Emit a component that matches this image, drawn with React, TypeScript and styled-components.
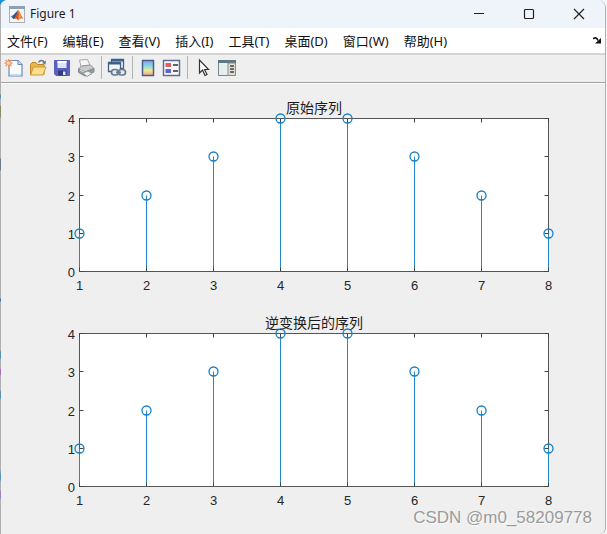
import React from "react";
import styled, { createGlobalStyle } from "styled-components";

const Global = createGlobalStyle`
  * { box-sizing: border-box; }
  body {
    margin: 0;
    background: #f6f6f6;
    font-family: "Noto Sans", "Noto Sans CJK SC", sans-serif;
    color: #1a1a1a;
  }
`;

const Desktop = styled.div`
  min-height: 100vh;
  display: flex;
  padding-right: 1px;
  background: linear-gradient(135deg, #1d8fd6 0, #1d8fd6 4px, #e9ddb8 5px, #f6f6f6 40px);
`;

const Window = styled.main`
  position: relative;
  flex: 1;
  min-width: 0;
  display: flex;
  flex-direction: column;
  overflow: hidden;
  padding-left: 1px;
  border-right: 1px solid #b0b0b0;
  border-radius: 8px 8px 6px 0;
  background:
    linear-gradient(
      #b0b0b0 94px, #4f93b8 95px 98px, #b0b0b0 99px 105px, #8d8a60 106px 117px,
      #b0b0b0 118px 158px, #6c7c88 159px 170px, #b0b0b0 171px 298px, #4a6fa8 299px 301px,
      #b0b0b0 302px 350px, #5b93b8 352px 358px, #b0b0b0 360px 368px, #a668c4 370px 374px,
      #b0b0b0 376px 390px, #5b93b8 392px 398px, #b0b0b0 400px 470px, #5b93b8 474px 479px,
      #b0b0b0 482px 490px, #a080c8 492px 498px, #b0b0b0 500px
    ) 0 0 / 1px 100% no-repeat,
    #efefef;
`;

const TitleBar = styled.header`
  height: 28px;
  display: flex;
  align-items: center;
  padding: 0 1px 0 8px;
  background: #eff3fa;
`;

const Title = styled.h1`
  flex: 1;
  margin: 0 0 0 5px;
  font-size: 12px;
  line-height: 18px;
  font-weight: 400;
`;

const CaptionButton = styled.button`
  width: 50px;
  height: 24px;
  padding: 0;
  border: 0;
  display: grid;
  place-items: center;
  background: transparent;
  color: #222;
`;

const MenuBar = styled.nav`
  height: 27px;
  display: flex;
  align-items: center;
  gap: 15px;
  padding: 0 4px 0 6px;
  border-bottom: 2px solid #d4d4d4;
  background: #fff;
`;

const MenuItem = styled.button`
  padding: 0;
  border: 0;
  background: transparent;
  color: #111;
  font: 400 13px/20px "Noto Sans", "Noto Sans CJK SC", sans-serif;
  white-space: nowrap;
`;

const DockButton = styled.button`
  margin-left: auto;
  padding: 0;
  border: 0;
  display: flex;
  background: transparent;
`;

const ToolBar = styled.div`
  height: 29px;
  display: flex;
  align-items: center;
  padding: 0 1px 3px;
  border-bottom: 1px solid #fff;
  box-shadow: inset 0 -1px #a0a0a0;
`;

const ToolButton = styled.button`
  width: 24px;
  height: 24px;
  padding: 0;
  border: 0;
  display: grid;
  place-items: center;
  background: transparent;
`;

const Divider = styled.span`
  width: 1px;
  height: 23px;
  margin: 0 3px;
  background: #b4b4b4;
`;

const Canvas = styled.section`
  flex: 1;
`;

const Plot = styled.svg`
  display: block;
  width: 100%;
  height: auto;
`;

const PlotTitle = styled.text`
  font: 400 14px "Noto Sans CJK SC", sans-serif;
  fill: #1c1c1c;
  text-anchor: middle;
`;

const Tick = styled.text`
  font: 400 13px "Liberation Sans", Arial, sans-serif;
  fill: #262626;
`;

const Watermark = styled.p`
  position: absolute;
  right: 13px;
  bottom: 8px;
  margin: 0;
  color: #9b9b9b;
  font: 400 17px/17px "Liberation Sans", Arial, sans-serif;
  text-shadow: 1px 1px #fafafa;
`;

const MatlabLogo = () => (
  <svg width="16" height="17" viewBox="0 0 16 17" aria-hidden="true">
    <rect x=".5" y=".5" width="15" height="16" fill="#f5f5f5" stroke="#a9afb5" />
    <path d="M0 0h16v3H0z" fill="#8aa1b6" />
    <path d="M1.500 10.500 5 8.500l2 1.500-2 3z" fill="#4a9ac0" />
    <path d="M5 8.500 9 4l-1 5-3 4-2-1.200z" fill="#31538a" />
    <path d="M9 4c2 1.500 3 6 5.500 9-2-1.500-3-1-5.500 1.500C8 12.500 7 12.800 5 13c2-2 3-5.500 4-9z" fill="#d9532c" />
    <path d="M9 4c1 3 .8 6 .2 10.300C10.700 12.500 12 11.500 13 12 11.500 9 10.500 5 9 4z" fill="#f19a38" />
  </svg>
);

const NewIcon = () => (
  <svg width="20" height="20" viewBox="0 0 20 20" aria-hidden="true">
    <path d="M5 2.500h9l4 4V18H5z" fill="#f9fcff" stroke="#6a87b2" strokeWidth="1.200" />
    <path d="M6 16h11v1.500H6z" fill="#c7dcf2" />
    <path d="M14 2.500v4h4" fill="#c6dcf3" stroke="#6a87b2" />
    <path d="M4.500 1v8M.5 5h8M1.500 2l6 6M7.500 2l-6 6" stroke="#ed9273" strokeWidth="1.300" />
    <circle cx="4.500" cy="5" r="1.700" fill="#ffdf70" />
  </svg>
);

const OpenIcon = () => (
  <svg width="20" height="20" viewBox="0 0 20 20" aria-hidden="true">
    <path d="M2.500 16.500V6.500l1.500-2h4l1.500 2H16v10z" fill="#eab74a" stroke="#b98524" />
    <path d="M2.500 17 5.500 9H18l-3 8z" fill="#ffe08a" stroke="#c99a36" />
    <path d="M10.500 4.500C12 1.800 15 2 16.500 4.500" fill="none" stroke="#64798c" strokeWidth="1.400" />
    <path d="m18 2.500-.5 4-3.500-1.500z" fill="#64798c" />
  </svg>
);

const SaveIcon = () => (
  <svg width="20" height="20" viewBox="0 0 20 20" aria-hidden="true">
    <path d="M2.500 2.500h15v15H4l-1.500-1.500z" fill="#5960c6" stroke="#5a60b4" />
    <path d="M5.500 3h9v7h-9z" fill="#dde8f7" />
    <path d="M5.500 3h9v2h-9z" fill="#fff" />
    <path d="M6 12.500h8.500v5H6z" fill="#343d76" />
    <path d="M11 13.500h2.500v3.500H11z" fill="#e4e9f5" />
  </svg>
);

const PrintIcon = () => (
  <svg width="20" height="20" viewBox="0 0 20 20" aria-hidden="true">
    <path d="m5 9-1.500-7 8-.5 3 7z" fill="#f5f7f8" stroke="#a3aaad" />
    <path d="m2.500 11 3-3 9-1 3.500 3.500-9 3.500z" fill="#c7cbcc" stroke="#8b9091" />
    <path d="M2.500 11v3.500L9 18v-4zM9 14l9-3.500V14l-9 4z" fill="#969c9e" stroke="#848b8d" />
    <path d="m7 15 5-2 4 2.500-5 3z" fill="#eef3e9" stroke="#92999a" />
    <path d="m4 12 4 2" stroke="#eee" />
  </svg>
);

const LinkIcon = () => (
  <svg width="20" height="20" viewBox="0 0 20 20" aria-hidden="true">
    <path d="M4.500 1.500h12v9h-12z" fill="#e8eef5" stroke="#405f8b" strokeWidth="1.300" />
    <path d="M4 1h13v2.500H4z" fill="#405f8b" />
    <path d="M1.500 4.500h12v9h-12z" fill="#f3f6fa" stroke="#405f8b" strokeWidth="1.300" />
    <path d="M1 4h13v2.500H1z" fill="#405f8b" />
    <g fill="#e4e8eb" stroke="#697b8a" strokeWidth="1.700">
      <rect x="4.500" y="11.500" width="7" height="5.500" rx="2.700" />
      <rect x="11.500" y="11.500" width="7" height="5.500" rx="2.700" />
      <path d="M9 14.300h5" />
    </g>
  </svg>
);

const ColorbarIcon = () => (
  <svg width="20" height="20" viewBox="0 0 20 20" aria-hidden="true">
    <defs>
      <linearGradient id="spectrum" x1="0" y1="0" x2="0" y2="1">
        <stop stopColor="#9696ed" />
        <stop offset=".35" stopColor="#80d7e8" />
        <stop offset=".65" stopColor="#e9e994" />
        <stop offset="1" stopColor="#efa490" />
      </linearGradient>
    </defs>
    <path d="M4.500 2.500h11v15h-11z" fill="url(#spectrum)" stroke="#485d89" strokeWidth="1.500" />
  </svg>
);

const LegendIcon = () => (
  <svg width="20" height="20" viewBox="0 0 20 20" aria-hidden="true">
    <path d="M1.500 2.500h16v15h-16z" fill="#fafafa" stroke="#5c6d94" strokeWidth="1.500" />
    <path d="M3.500 5H9v4H3.500z" fill="#e45c5c" />
    <path d="M3.500 11H9v4H3.500z" fill="#6060dc" />
    <path d="M11 7h5M11 13h5" stroke="#333" strokeWidth="1.500" />
  </svg>
);

const PointerIcon = () => (
  <svg width="20" height="20" viewBox="0 0 20 20" aria-hidden="true">
    <path d="M6.500 2v13l3-3 2.500 5.500 2-1-2.500-5h4z" fill="#fff" stroke="#333" strokeWidth="1.200" />
  </svg>
);

const InspectorIcon = () => (
  <svg width="20" height="20" viewBox="0 0 20 20" aria-hidden="true">
    <path d="M1.500 2.500h17v15h-17z" fill="#e5eff1" stroke="#7b8486" />
    <path d="M1 2h18v3H1z" fill="#5d7785" />
    <path d="M11 5h7.500v12.500H11z" fill="#e1ded5" stroke="#858a8a" />
    <path d="M13 8h4M13 11h4M13 14h4" stroke="#444" strokeWidth="1.300" />
  </svg>
);

const menus = [
  "文件(F)", "编辑(E)", "查看(V)", "插入(I)",
  "工具(T)", "桌面(D)", "窗口(W)", "帮助(H)",
];

const toolGroups = [
  [["新建", NewIcon], ["打开", OpenIcon], ["保存", SaveIcon], ["打印", PrintIcon]],
  [["链接绘图", LinkIcon]],
  [["插入颜色栏", ColorbarIcon], ["插入图例", LegendIcon]],
  [["编辑绘图", PointerIcon], ["属性检查器", InspectorIcon]],
] as [string, () => React.JSX.Element][][];

const left = 78.5;
const step = 67;
const top = 34.5;
const bottom = 187.5;

function StemPlot({ title, values }: { title: string; values: number[] }) {
  const px = (n: number) => left + (n - 1) * step;
  const py = (v: number) => Math.round(bottom - (v * (bottom - top)) / 4 - 0.5) + 0.5;
  const right = px(values.length);
  return (
    <Plot viewBox="0 0 604 215" role="img" aria-label={title}>
      <rect x={left} y={top} width={right - left} height={bottom - top} fill="#fff" stroke="#555" />
      {values.map((v, i) => (
        <g key={i}>
          <path d={`M${px(i + 1)} ${bottom}V${py(v)}`} stroke="#2487cb" />
          <path d={`M${px(i + 1)} ${bottom}v-4M${px(i + 1)} ${top}v4`} stroke="#444" />
          <Tick x={px(i + 1)} y={206} textAnchor="middle">{i + 1}</Tick>
        </g>
      ))}
      {[0, 1, 2, 3, 4].map((v) => (
        <g key={v}>
          <path d={`M${left} ${py(v)}h4M${right} ${py(v)}h-4`} stroke="#444" />
          <Tick x={74} y={py(v) + 5} textAnchor="end">{v}</Tick>
        </g>
      ))}
      {values.map((v, i) => (
        <circle key={i} cx={px(i + 1)} cy={py(v)} r="4.500" fill="none" stroke="#1580c7" strokeWidth="1.300" />
      ))}
      <PlotTitle x={313} y={29}>{title}</PlotTitle>
    </Plot>
  );
}

const samples = [1, 2, 3, 4, 4, 3, 2, 1];

export default function App() {
  return (
    <Desktop>
      <Global />
      <Window>
        <TitleBar>
          <MatlabLogo />
          <Title>Figure 1</Title>
          <CaptionButton aria-label="最小化">
            <svg width="12" height="12"><path d="M1 5.500h10" stroke="currentColor" /></svg>
          </CaptionButton>
          <CaptionButton aria-label="最大化">
            <svg width="12" height="12"><rect x="1.500" y="1.500" width="9" height="9" rx="1" fill="none" stroke="currentColor" strokeWidth="1.200" /></svg>
          </CaptionButton>
          <CaptionButton aria-label="关闭">
            <svg width="12" height="12"><path d="m1 1 10 10M11 1 1 11" stroke="currentColor" strokeWidth="1.200" /></svg>
          </CaptionButton>
        </TitleBar>
        <MenuBar>
          {menus.map((name) => (
            <MenuItem key={name}>{name}</MenuItem>
          ))}
          <DockButton aria-label="停靠">
            <svg width="8" height="7" viewBox="0 0 8 7">
              <path d="M0 2C2 0 4 1 5 3.500" fill="none" stroke="#111" strokeWidth="1.600" />
              <path d="M8 1v5.500H2z" fill="#111" />
            </svg>
          </DockButton>
        </MenuBar>
        <ToolBar>
          {toolGroups.map((group, g) => (
            <React.Fragment key={g}>
              {g > 0 && <Divider />}
              {group.map(([label, Icon]) => (
                <ToolButton key={label} aria-label={label}><Icon /></ToolButton>
              ))}
            </React.Fragment>
          ))}
        </ToolBar>
        <Canvas>
          <StemPlot title="原始序列" values={samples} />
          <StemPlot title="逆变换后的序列" values={samples} />
        </Canvas>
        <Watermark>CSDN @m0_58209778</Watermark>
      </Window>
    </Desktop>
  );
}
